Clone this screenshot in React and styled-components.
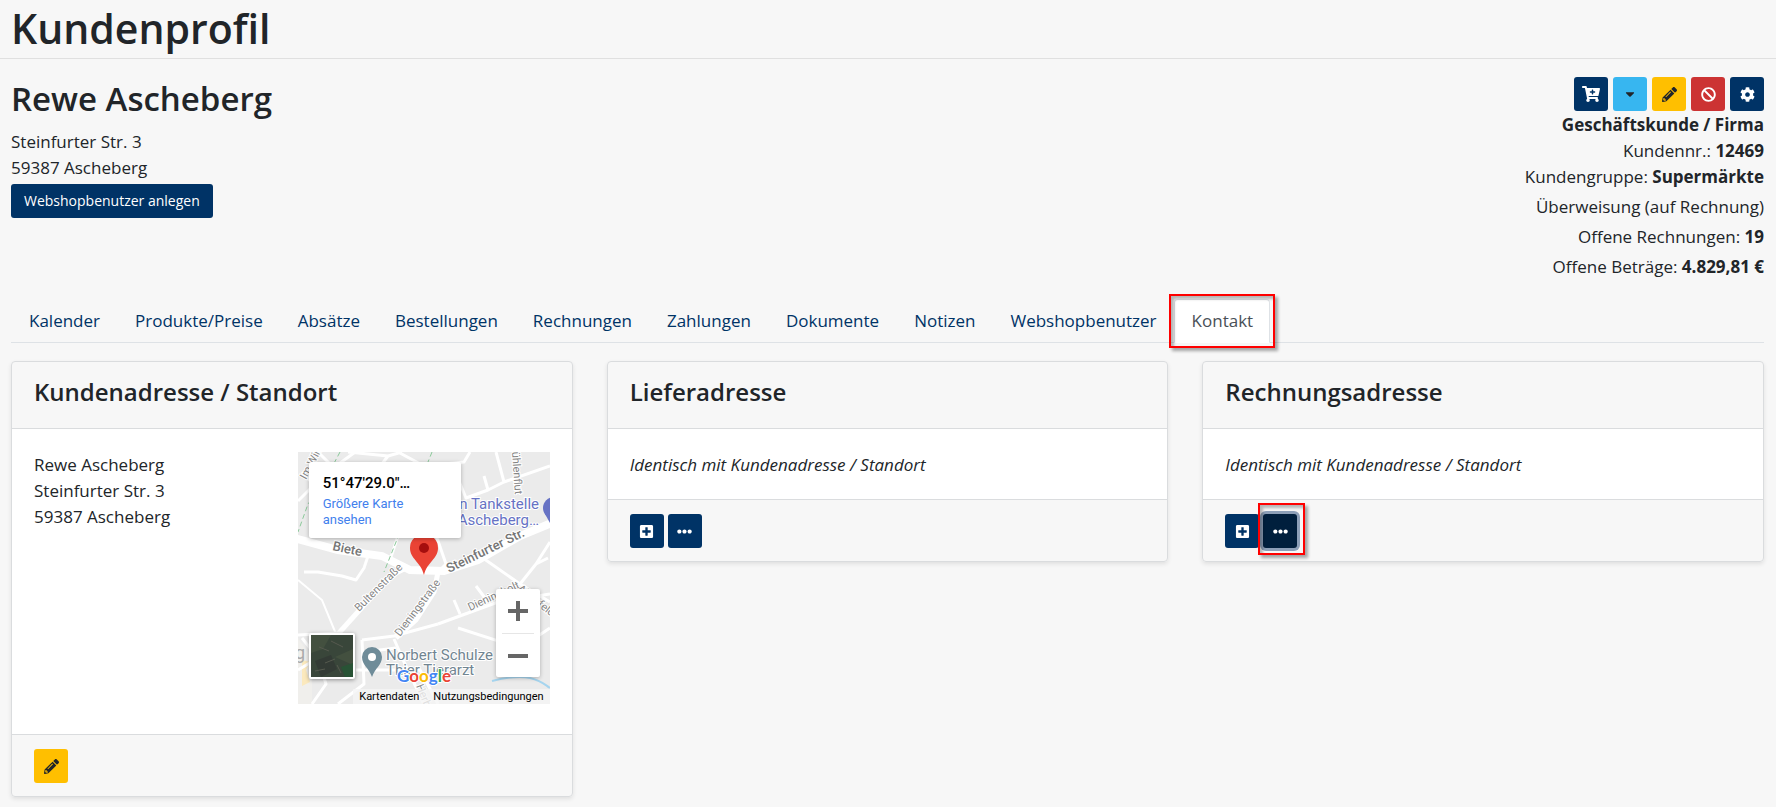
import React, { useState } from 'react'
import styled, { createGlobalStyle, css } from 'styled-components'
import { FaPencilAlt, FaBan, FaCog, FaPlusSquare, FaEllipsisH, FaCaretDown } from 'react-icons/fa'

const colors = {
	primary: '#003366',
	primaryActive: '#001f3d',
	info: '#37b6f0',
	warning: '#ffbf00',
	danger: '#cc3333',
	text: '#212529',
	border: '#dadcde',
	page: '#f7f7f7',
}

const tabs = [
	'Kalender',
	'Produkte/Preise',
	'Absätze',
	'Bestellungen',
	'Rechnungen',
	'Zahlungen',
	'Dokumente',
	'Notizen',
	'Webshopbenutzer',
	'Kontakt',
]

const CartPlus = () => (
	<svg width="18" height="16" viewBox="0 0 576 512" fill="currentColor" aria-hidden="true">
		<path d="M504.717 320H211.572l6.545 32h268.418c15.401 0 26.816 14.301 23.403 29.319l-5.517 24.276C523.112 414.668 536 433.828 536 456c0 31.202-25.519 56.444-56.824 55.994-29.823-.429-54.35-24.631-55.155-54.447-.44-16.287 6.085-31.049 16.803-41.548H231.176C241.553 426.165 248 440.326 248 456c0 31.813-26.528 57.431-58.67 55.938-28.54-1.325-51.751-24.385-53.251-52.917-1.158-22.034 10.436-41.455 28.051-51.586L93.883 64H24C10.745 64 0 53.255 0 40V24C0 10.745 10.745 0 24 0h102.529c11.401 0 21.228 8.021 23.513 19.19L159.208 64H551.99c15.401 0 26.816 14.301 23.403 29.319l-47.273 208C525.637 312.246 515.923 320 504.717 320zM408 168h-48v-40c0-8.837-7.163-16-16-16h-16c-8.837 0-16 7.163-16 16v40h-48c-8.837 0-16 7.163-16 16v16c0 8.837 7.163 16 16 16h48v40c0 8.837 7.163 16 16 16h16c8.837 0 16-7.163 16-16v-40h48c8.837 0 16-7.163 16-16v-16c0-8.837-7.163-16-16-16z" />
	</svg>
)

const CustomerMap = () => (
	<MapBox>
		<MapDrawing viewBox="0 0 252 252" role="img" aria-label="Karte">
			<rect width="252" height="252" fill="#ebebeb" />
			<path d="M0 186 L14 206 L14 252 L0 252Z" fill="#f0efec" />
			<path d="M4 208 L12 210 L8 218 L12 230 L4 234Z" fill="#fbe9bd" />
			<path d="M194 229 C206 226 220 223 232 226 S246 232 252 236" fill="none" stroke="#a6d5ef" strokeWidth="2" />
			<g fill="none" stroke="#fff" strokeWidth="3" strokeLinejoin="round">
				<path d="M0 49 L16 33 L38 14 L60 -2 M16 33 L4 20 M20 0 L32 12" />
				<path d="M50 0 L90 4 L104 0 M90 4 L84 12 L64 12 M100 0 L126 14 L166 10 L172 0" />
				<path d="M154 12 L168 46 L190 38 L206 30 L252 14 M206 30 L198 0 M190 38 L186 24" />
				<path d="M182 104 L222 132 L252 150" />
				<path d="M222 132 L238 112 L250 106 M238 112 L252 90" />
				<path d="M6 120 L20 120 L44 124 L58 128 L66 116 L70 104" />
				<path d="M92 108 L102 78 L110 60 M130 60 L148 112 L138 122" />
				<path d="M252 142 L200 150 L140 172 M178 134 L190 150 M156 148 L162 162" />
				<path d="M64 188 L96 184 L140 172 M160 176 L222 196 L252 176 M96 187 L106 210 L126 252" />
				<path d="M0 183 L40 181 M64 188 L66 232 L40 252 M58 218 L122 218 L140 252 M66 200 L98 196" />
				<path d="M0 218 L20 206 L28 232 L14 252 M20 206 L4 186" />
			</g>
			<path d="M0 128 L24 148 L38 182" fill="none" stroke="#fff" strokeWidth="2" />
			<g fill="none" stroke="#fff" strokeWidth="5" strokeLinejoin="round">
				<path d="M110 115 L96 122 L76 142 L40 182" />
				<path d="M140 120 L136 140 L118 168 L98 186" />
			</g>
			<path d="M-4 86 L40 98 L84 104 L112 118 L146 119 L180 108 L222 84 L256 70" fill="none" stroke="#fff" strokeWidth="8" />
			<path d="M42 0 L24 34 L10 52 L0 80 M134 0 L126 20 L102 80 L86 120" fill="none" stroke="#8bc99a" strokeWidth="1" strokeDasharray="5 3" />
			<g fontFamily="Roboto, sans-serif" fontWeight="500" fill="#757575" stroke="#fff" strokeWidth="2" paintOrder="stroke">
				<text x="34" y="98" fontSize="13" transform="rotate(12 34 98)">Biete</text>
				<text x="151" y="121" fontSize="13" transform="rotate(-26 151 121)">Steinfurter Str.</text>
				<g fontSize="11" fontWeight="400" fill="#858585">
					<text x="61" y="160" transform="rotate(-45 61 160)">Bultenstraße</text>
					<text x="102" y="185" transform="rotate(-53 102 185)">Dieningstraße</text>
					<text x="172" y="159" transform="rotate(-25 172 159)">Dieningholt</text>
					<text x="219" y="138" transform="rotate(38 219 138)">Altenfelds</text>
					<text x="8" y="28" transform="rotate(-62 8 28)">Im Wink</text>
					<text x="214" y="0" transform="rotate(86 214 0)">ühlenflut</text>
					<text x="118" y="234" transform="rotate(68 118 234)">Herb</text>
				</g>
			</g>
			<g fontFamily="Roboto, sans-serif" fontSize="15" fill="#6672c4" stroke="#fff" strokeWidth="2" paintOrder="stroke">
				<text x="241" y="57" textAnchor="end">n Tankstelle</text>
				<text x="241" y="73" textAnchor="end">Ascheberg…</text>
			</g>
			<circle cx="256" cy="56" r="11" fill="#6672c4" />
			<path d="M247 62 L256 78 L262 62Z" fill="#6672c4" />
			<text x="-3" y="207" fontFamily="Roboto, sans-serif" fontSize="18" fill="#aaa">g</text>
			<g fontFamily="Roboto, sans-serif" fontSize="15" fill="#718591" stroke="#fff" strokeWidth="2" paintOrder="stroke">
				<text x="88" y="208">Norbert Schulze</text>
				<text x="88" y="223">Thier Tierarzt</text>
			</g>
			<path d="M74 195 a10 10 0 0 1 10 10 c0 8 -7 11 -10 20 c-3 -9 -10 -12 -10 -20 a10 10 0 0 1 10 -10Z" fill="#6f8c99" />
			<circle cx="74" cy="205" r="4" fill="#fff" />
			<path d="M126 82 a14 14 0 0 1 14 14 c0 11 -11 14 -14 27 c-3 -13 -14 -16 -14 -27 a14 14 0 0 1 14 -14Z" fill="#ea4335" />
			<circle cx="126" cy="96" r="5" fill="#a50e0e" />
			<text x="99" y="230" fontFamily="Lato, sans-serif" fontSize="17" fontWeight="700" stroke="#fff" strokeWidth="2" paintOrder="stroke">
				<tspan fill="#4285f4">G</tspan><tspan fill="#ea4335">o</tspan><tspan fill="#fbbc04">o</tspan><tspan fill="#4285f4">g</tspan><tspan fill="#34a853">l</tspan><tspan fill="#ea4335">e</tspan>
			</text>
		</MapDrawing>
		<MapInfo>
			<strong>51°47'29.0"…</strong>
			<a href="#karte">Größere Karte ansehen</a>
		</MapInfo>
		<Satellite type="button" aria-label="Satellitenbild">
			<svg viewBox="0 0 42 42" aria-hidden="true">
				<rect width="42" height="42" fill="#39463a" />
				<path d="M0 0 L20 0 L12 14 L0 18Z M24 22 L42 14 L42 30Z" fill="#43503f" />
				<path d="M4 26 L20 20 L26 34 L10 42Z" fill="#333b35" />
				<path d="M30 32 L42 28 L42 42 L34 42Z" fill="#285335" />
				<path d="M8 12 L18 16 M20 6 L32 12 M14 28 L24 24 M26 30 L30 38 M4 36 L14 34" stroke="#55594e" strokeWidth="1" />
			</svg>
		</Satellite>
		<ZoomControl>
			<button type="button" aria-label="Vergrößern">
				<svg width="20" height="20" viewBox="0 0 20 20" aria-hidden="true"><path d="M0 8H8V0H12V8H20V12H12V20H8V12H0Z" fill="#666" /></svg>
			</button>
			<button type="button" aria-label="Verkleinern">
				<svg width="20" height="20" viewBox="0 0 20 20" aria-hidden="true"><path d="M0 8H20V12H0Z" fill="#666" /></svg>
			</button>
		</ZoomControl>
		<MapTerms>
			<a href="#kartendaten">Kartendaten</a>
			<a href="#nutzung">Nutzungsbedingungen</a>
		</MapTerms>
	</MapBox>
)

const App = () =>
{
	const [activeTab, setActiveTab] = useState('Kontakt')

	return (
		<>
			<GlobalStyle />
			<PageHeader>
				<h1>Kundenprofil</h1>
			</PageHeader>
			<Page>
				<Profile>
					<div>
						<h2>Rewe Ascheberg</h2>
						<p>Steinfurter Str. 3</p>
						<p>59387 Ascheberg</p>
						<ProfileButton type="button">Webshopbenutzer anlegen</ProfileButton>
					</div>
					<Summary>
						<Toolbar>
							<IconButton type="button" aria-label="Bestellung anlegen"><CartPlus /></IconButton>
							<IconButton type="button" $variant="info" aria-label="Mehr"><FaCaretDown size={14} /></IconButton>
							<IconButton type="button" $variant="warning" aria-label="Bearbeiten"><FaPencilAlt size={15} /></IconButton>
							<IconButton type="button" $variant="danger" aria-label="Sperren"><FaBan size={15} /></IconButton>
							<IconButton type="button" aria-label="Einstellungen"><FaCog size={15} /></IconButton>
						</Toolbar>
						<p><b>Geschäftskunde / Firma</b></p>
						<p>Kundennr.: <b>12469</b></p>
						<p>Kundengruppe: <b>Supermärkte</b></p>
						<SummaryRow>Überweisung (auf Rechnung)</SummaryRow>
						<SummaryRow>Offene Rechnungen: <b>19</b></SummaryRow>
						<SummaryRow>Offene Beträge: <b>4.829,81 €</b></SummaryRow>
					</Summary>
				</Profile>
				<Tabs>
					{tabs.map((tab) => (
						<TabItem key={tab}>
							<Tab href="#" $active={tab === activeTab} onClick={() => setActiveTab(tab)}>{tab}</Tab>
							{tab === 'Kontakt' && <Marker $inset="-5px" />}
						</TabItem>
					))}
				</Tabs>
				<Cards>
					<Card>
						<CardHeader><h3>Kundenadresse / Standort</h3></CardHeader>
						<CardBody>
							<address>
								<p>Rewe Ascheberg</p>
								<p>Steinfurter Str. 3</p>
								<p>59387 Ascheberg</p>
							</address>
							<CustomerMap />
						</CardBody>
						<CardFooter>
							<IconButton type="button" $variant="warning" aria-label="Adresse bearbeiten"><FaPencilAlt size={15} /></IconButton>
						</CardFooter>
					</Card>
					<Card>
						<CardHeader><h3>Lieferadresse</h3></CardHeader>
						<CardBody><em>Identisch mit Kundenadresse / Standort</em></CardBody>
						<CardFooter>
							<IconButton type="button" aria-label="Lieferadresse hinzufügen"><FaPlusSquare size={15} /></IconButton>
							<IconButton type="button" aria-label="Lieferadresse auswählen"><FaEllipsisH size={15} /></IconButton>
						</CardFooter>
					</Card>
					<Card>
						<CardHeader><h3>Rechnungsadresse</h3></CardHeader>
						<CardBody><em>Identisch mit Kundenadresse / Standort</em></CardBody>
						<CardFooter>
							<IconButton type="button" aria-label="Rechnungsadresse hinzufügen"><FaPlusSquare size={15} /></IconButton>
							<Marked>
								<IconButton type="button" $pressed aria-label="Rechnungsadresse auswählen"><FaEllipsisH size={15} /></IconButton>
								<Marker $inset="-11px -8px -7px -5px" />
							</Marked>
						</CardFooter>
					</Card>
				</Cards>
			</Page>
		</>
	)
}

const GlobalStyle = createGlobalStyle`
* {
	box-sizing: border-box;
}
body {
	margin: 0;
	background: ${colors.page};
	color: ${colors.text};
	font-family: "Open Sans", "Noto Sans", sans-serif;
	font-size: 17px;
	line-height: 26px;
}
h1, h2, h3, p {
	margin: 0;
}
h1, h2, h3 {
	font-weight: 600;
}
address {
	font-style: normal;
}
`
const PageHeader = styled.header`
	padding: 2px 12px 3px 11px;
	border-bottom: 1px solid #e0e0e0;
	h1 {
		font-size: 41px;
		line-height: 53px;
	}
`
const Page = styled.main`
	padding: 18px 12px 10px 11px;
`
const Profile = styled.section`
	display: flex;
	justify-content: space-between;
	min-height: 222px;
	h2 {
		font-size: 33px;
		line-height: 44px;
		margin-bottom: 8px;
	}
`
const Summary = styled.div`
	text-align: right;
`
const SummaryRow = styled.p`
	padding-top: 4px;
`
const Toolbar = styled.div`
	display: flex;
	justify-content: flex-end;
	gap: 5px;
	margin-bottom: 1px;
`
const Button = styled.button`
	height: 34px;
	padding: 0 13px;
	border: 0;
	border-radius: 3px;
	background: ${colors.primary};
	color: #fff;
	font: inherit;
	font-size: 14px;
	cursor: pointer;
`
const ProfileButton = styled(Button)`
	margin-top: 3px;
`
const variants = {
	info: css`background: ${colors.info}; color: ${colors.text};`,
	warning: css`background: ${colors.warning}; color: ${colors.text};`,
	danger: css`background: ${colors.danger};`,
}
const IconButton = styled(Button)`
	display: inline-flex;
	align-items: center;
	justify-content: center;
	width: 34px;
	padding: 0;
	${({ $variant }) => variants[$variant]}
	${({ $pressed }) => $pressed && css`
		background: ${colors.primaryActive};
		box-shadow: 0 0 0 3px #8c9fb8;
	`}
`
const Tabs = styled.nav`
	display: flex;
	border-bottom: 1px solid #dee2e6;
`
const TabItem = styled.div`
	position: relative;
	margin-bottom: -1px;
`
const Tab = styled.a`
	display: block;
	padding: 8px 16px 8px 17px;
	border: 1px solid transparent;
	border-radius: 4px 4px 0 0;
	color: ${colors.primary};
	text-decoration: none;
	${({ $active }) => $active && css`
		background: #fff;
		border-color: #dee2e6 #dee2e6 #fff;
		color: #495057;
	`}
`
const Marked = styled.span`
	position: relative;
	display: inline-flex;
`
/* red frame laid over the highlighted control */
const Marker = styled.span`
	position: absolute;
	inset: ${({ $inset }) => $inset};
	border: 2px solid #f00;
	box-shadow: 3px 3px 3px #0005, inset 3px 3px 3px #0004;
	pointer-events: none;
`
const Cards = styled.div`
	display: grid;
	grid-template-columns: repeat(3, minmax(0, 1fr));
	align-items: start;
	gap: 34px;
	padding-top: 18px;
`
const Card = styled.section`
	border: 1px solid ${colors.border};
	border-radius: 4px;
	box-shadow: 0 2px 4px #00000018;
	overflow: hidden;
`
const CardHeader = styled.header`
	padding: 14px 22px 20px;
	border-bottom: 1px solid ${colors.border};
	h3 {
		font-size: 24px;
		line-height: 32px;
	}
`
const CardBody = styled.div`
	display: flex;
	justify-content: space-between;
	gap: 22px;
	padding: 23px 22px 21px;
	background: #fff;
`
const CardFooter = styled.footer`
	display: flex;
	gap: 4px;
	padding: 14px 22px 13px;
	border-top: 1px solid ${colors.border};
`
const MapBox = styled.div`
	position: relative;
	width: 252px;
	height: 252px;
	margin-bottom: 9px;
	overflow: hidden;
	font-family: Roboto, sans-serif;
	a {
		text-decoration: none;
	}
`
const MapDrawing = styled.svg`
	display: block;
	width: 100%;
	height: 100%;
`
const MapInfo = styled.div`
	position: absolute;
	left: 11px;
	top: 10px;
	width: 152px;
	padding: 12px 14px 10px;
	border-radius: 2px;
	background: #fff;
	box-shadow: 0 1px 4px #0004;
	font-size: 13px;
	line-height: 16px;
	strong {
		display: block;
		margin-bottom: 4px;
		color: #000;
		font-size: 15px;
		font-weight: 500;
		line-height: 18px;
	}
	a {
		display: block;
		width: 90px;
		color: #427fed;
	}
`
const Satellite = styled.button`
	position: absolute;
	left: 11px;
	bottom: 25px;
	width: 46px;
	height: 46px;
	padding: 0;
	border: 2px solid #fff;
	border-radius: 2px;
	box-shadow: 0 1px 4px #0006;
	svg {
		display: block;
	}
`
const ZoomControl = styled.div`
	position: absolute;
	right: 10px;
	bottom: 27px;
	width: 44px;
	padding: 0 6px;
	border-radius: 2px;
	background: #fff;
	box-shadow: 0 1px 4px #0004;
	button {
		display: flex;
		align-items: center;
		justify-content: center;
		width: 100%;
		height: 44px;
		padding: 0;
		border: 0;
		background: none;
	}
	button + button {
		border-top: 1px solid #e6e6e6;
	}
`
const MapTerms = styled.div`
	position: absolute;
	right: 0;
	bottom: 0;
	display: flex;
	gap: 14px;
	padding: 0 6px;
	background: #f5f5f5cc;
	font-size: 11px;
	line-height: 15px;
	a {
		color: #000;
	}
`

export default App
